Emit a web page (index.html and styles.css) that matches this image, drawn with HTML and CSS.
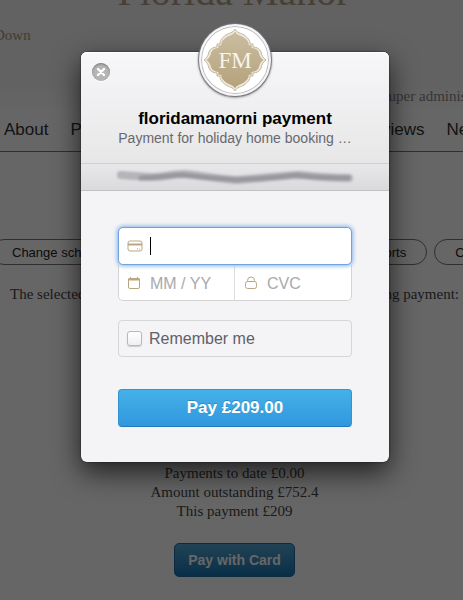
FILE: index.html
```html
<!DOCTYPE html>
<html lang="en">
<head>
  <meta charset="UTF-8">
  <meta name="viewport" content="width=device-width, initial-scale=1.0">
  <title>Florida Manor - Payment</title>
  <link rel="stylesheet" href="styles.css">
</head>
<body>
  <div class="page">
    <header class="site-header">
      <div class="site-title">Florida Manor</div>
      <div class="site-tagline">Down</div>
      <div class="site-user">super administrator</div>
    </header>
    <nav class="site-nav">
      <a href="#">About</a>
      <a href="#">Prices</a>
      <a href="#" class="push">Reviews</a>
      <a href="#">News</a>
    </nav>
    <div class="actions">
      <button class="pill">Change schedule</button>
      <button class="pill push">Reports</button>
      <button class="pill">Contact</button>
    </div>
    <p class="intro"><span>The selected booking</span><span>following payment:</span></p>
    <div class="totals">
      <div>Payments to date £0.00</div>
      <div>Amount outstanding £752.4</div>
      <div>This payment £209</div>
      <button class="card-button">Pay with Card</button>
    </div>
  </div>

  <div class="overlay">
    <div class="modal" role="dialog" aria-labelledby="modal-title">
      <button class="close" aria-label="Close">
        <svg width="18" height="18" viewBox="0 0 18 18">
          <path d="M6 6l6 6M12 6l-6 6" stroke="#fff" stroke-width="2.4" stroke-linecap="round"/>
        </svg>
      </button>
      <div class="logo">
        <svg width="64" height="64" viewBox="-32 -32 64 64">
          <defs>
            <linearGradient id="gold" x1="0" y1="0" x2="0" y2="1">
              <stop offset="0" stop-color="#cabda1"/>
              <stop offset="1" stop-color="#b5a27c"/>
            </linearGradient>
            <path id="crest" d="M0-31C2-27 6-27 9-25C13-22 15-20 15-16H18V-13C22-13 25-11 26-8C27-4 28-2 31 0C28 2 27 4 26 8C25 11 22 13 18 13V16H15C15 20 13 22 9 25C6 27 2 27 0 31C-2 27-6 27-9 25C-13 22-15 20-15 16H-18V13C-22 13-25 11-26 8C-27 4-28 2-31 0C-28-2-27-4-26-8C-25-11-22-13-18-13V-16H-15C-15-20-13-22-9-25C-6-27-2-27 0-31Z"/>
          </defs>
          <use href="#crest" fill="#efeadf" stroke="#c3b596" stroke-width="1"/>
          <use href="#crest" fill="url(#gold)" transform="scale(.92)"/>
          <text x="0" y="8" text-anchor="middle" font-family="Liberation Serif, serif" font-size="23" fill="#f8f4e9">FM</text>
        </svg>
      </div>
      <div class="modal-header">
        <h1 id="modal-title">floridamanorni payment</h1>
        <h2>Payment for holiday home booking …</h2>
      </div>
      <div class="account">
        <svg width="242" height="22" viewBox="0 0 242 22">
          <g class="smudge">
            <path d="M7 9C16 10 24 10 33 11C48 12 58 8 70 8C84 9 98 12 122 14C146 13 160 10 186 9C204 11 220 12 235 12" stroke="#b4b4b9" stroke-width="8"/>
            <path d="M27 12C44 12 56 9 69 9C84 11 100 12 122 14C148 13 162 11 183 9C200 12 217 12 234 12" stroke="#98989e" stroke-width="5"/>
          </g>
        </svg>
      </div>
      <form class="modal-body">
        <div class="field card">
          <svg width="16" height="14" viewBox="0 0 16 14" fill="none" stroke="#b9a783">
            <rect x="1" y="2" width="14" height="10" rx="2"/>
            <path d="M1 5.5h14" stroke-width="2"/>
            <path d="M10 10h1M12 10h1"/>
          </svg>
          <span class="caret"></span>
          <input type="text" aria-label="Card number">
        </div>
        <div class="field-row">
          <div class="field">
            <svg width="14" height="14" viewBox="0 0 14 14" fill="none" stroke="#b9a783">
              <rect x="1.5" y="2.5" width="11" height="10" rx="1.5"/>
              <path d="M1 3.5h12" stroke-width="2"/>
              <path d="M3.5 1v2M10.5 1v2"/>
            </svg>
            <input type="text" placeholder="MM / YY" aria-label="Expiry date">
          </div>
          <div class="field">
            <svg width="14" height="14" viewBox="0 0 14 14" fill="none" stroke="#b9a783">
              <rect x="1.5" y="5.5" width="11" height="7" rx="2"/>
              <path d="M3.5 5.5V4.5a3.5 3.5 0 0 1 7 0V5.5"/>
            </svg>
            <input type="text" placeholder="CVC" aria-label="CVC">
          </div>
        </div>
        <label class="remember">
          <input type="checkbox">
          <span>Remember me</span>
        </label>
        <button type="button" class="pay">Pay £209.00</button>
      </form>
    </div>
  </div>
</body>
</html>
```
FILE: styles.css
```css
* {
  box-sizing: border-box;
}

body {
  margin: 0;
  background: #fff;
  color: #444;
  font-family: Georgia, "Liberation Serif", serif;
  font-size: 15px;
  overflow: hidden;
}

button,
input {
  font-family: "Helvetica Neue", "Liberation Sans", sans-serif;
}

/* Page behind the dialog */
.page {
  display: flow-root;
  min-height: 100vh;
  overflow: hidden;
}

.site-header {
  display: flow-root;
  height: 114px;
  background: linear-gradient(#f4f4f4 70%, #fff);
}

.site-title {
  margin-top: -35px;
  padding-left: 4px;
  line-height: 54px;
  font-size: 40px;
  text-align: center;
  color: #b3a184;
}

.site-tagline {
  margin: 6px 0 0 -6px;
  line-height: 20px;
  color: #ad9678;
}

.site-user {
  margin: 41px -52px 0 0;
  line-height: 20px;
  font-size: 15px;
  text-align: right;
  color: #888;
  padding-right: 16px;
}

.site-nav {
  display: flex;
  gap: 22px;
  height: 38px;
  padding: 6px 0 0 4px;
  border-bottom: 1px solid #777;
  font-family: "Helvetica Neue", "Liberation Sans", sans-serif;
  font-size: 17px;
  line-height: 20px;
}

.site-nav a {
  color: #333;
  text-decoration: none;
}

.site-nav a:last-child {
  margin-right: -26px;
}

.push {
  margin-left: auto;
}

.actions {
  display: flex;
  gap: 7px;
  margin: 87px -58px 0 -9px;
}

.pill {
  height: 26px;
  padding: 0 20px;
  border: 1px solid #777;
  border-radius: 13px;
  background: transparent;
  font-size: 13px;
  color: #222;
}

.intro {
  display: flex;
  justify-content: space-between;
  margin: 19px 4px 0 10px;
  line-height: 20px;
}

.totals {
  margin-top: 160px;
  padding-left: 6px;
  line-height: 19px;
  text-align: center;
}

.card-button {
  height: 34px;
  margin-top: 22px;
  padding: 0 13px;
  border: 1px solid #1a6da3;
  border-radius: 5px;
  background: linear-gradient(#57a8d5, #1574b5);
  font-size: 14px;
  font-weight: bold;
  color: #fff;
}

/* Dialog */
.overlay {
  position: absolute;
  inset: 0;
  padding: 52px 0 0 7px;
  background: rgba(0, 0, 0, 0.6);
  font-family: "Helvetica Neue", "Liberation Sans", sans-serif;
}

.modal {
  position: relative;
  width: 308px;
  max-width: 94%;
  margin: 0 auto;
  border-radius: 6px;
  background: #f4f4f6;
  box-shadow: 0 0 2px rgba(0, 0, 0, 0.7), 0 10px 28px rgba(0, 0, 0, 0.7);
}

.close {
  position: absolute;
  top: 11px;
  left: 11px;
  width: 18px;
  height: 18px;
  padding: 0;
  border: 0;
  border-radius: 50%;
  background: #b5b5b6;
  box-shadow: inset 0 1px 2px #777, 0 1px 0 #fff;
}

.close svg {
  display: block;
}

.logo {
  position: absolute;
  top: -28px;
  left: 50%;
  display: flex;
  align-items: center;
  justify-content: center;
  width: 72px;
  height: 72px;
  margin-left: -36px;
  border: 2px solid #f5f5f7;
  border-radius: 50%;
  background: #fff;
  box-shadow: inset 0 0 0 1px #b9babf, 0 0 1px 1px #77777c, 0 1px 3px #555;
}

.logo svg {
  flex: none;
}

.modal-header {
  height: 112px;
  padding-top: 56px;
  border-bottom: 1px solid #cfcfd1;
  border-radius: 6px 6px 0 0;
  background: linear-gradient(#f7f7f9, #e7e7e8);
  box-shadow: inset 0 1px 0 #fff;
  text-align: center;
}

.modal-header h1 {
  margin: 0;
  line-height: 21px;
  font-size: 17px;
  color: #000;
}

.modal-header h2 {
  margin: 0;
  line-height: 19px;
  font-size: 14px;
  font-weight: normal;
  color: #68686e;
}

.account {
  display: flex;
  align-items: center;
  justify-content: center;
  height: 27px;
  border-bottom: 1px solid #c1c1c4;
  background: linear-gradient(#e8e8ea, #dadadd);
}

.smudge {
  fill: none;
  stroke-linecap: round;
  stroke-linejoin: round;
  filter: blur(1px);
}

.modal-body {
  padding: 36px 37px 35px;
}

.field {
  display: flex;
  flex: 1;
  align-items: center;
  min-width: 0;
  height: 35px;
  padding: 0 8px;
}

.field svg {
  flex: none;
}

.field input {
  flex: 1;
  width: 100%;
  min-width: 0;
  margin-left: 9px;
  padding: 2px 0 0;
  border: 0;
  outline: 0;
  background: transparent;
  font-size: 16px;
  color: #222;
}

.field input::placeholder {
  color: #a9a9ae;
}

.card {
  position: relative;
  height: 38px;
  border: 1px solid #6fa3df;
  border-radius: 5px;
  background: #fff;
  box-shadow: 0 0 4px 1px #86b3ea;
}

.caret {
  width: 1px;
  height: 18px;
  margin-left: 7px;
  background: #000;
}

.field-row {
  display: flex;
  border: 1px solid #d3d3d6;
  border-top: 0;
  border-radius: 0 0 5px 5px;
  background: #fff;
}

.field-row .field + .field {
  padding-left: 9px;
  border-left: 1px solid #dedee1;
}

.remember {
  display: flex;
  align-items: center;
  height: 37px;
  margin-top: 19px;
  padding-left: 8px;
  border: 1px solid #d6d6d9;
  border-radius: 4px;
  font-size: 16px;
  color: #606066;
}

.remember input {
  appearance: none;
  width: 15px;
  height: 15px;
  margin: 0 7px 0 0;
  border: 1px solid #b8b8bc;
  border-radius: 3px;
  background: linear-gradient(#fff, #f0f0f2);
  box-shadow: 0 1px 1px #ccc;
}

.pay {
  display: block;
  width: 100%;
  height: 38px;
  margin-top: 32px;
  border: 1px solid #3193d2;
  border-bottom-color: #2477bb;
  border-radius: 4px;
  background: linear-gradient(#45b1e8, #3097de);
  font-size: 17px;
  font-weight: bold;
  color: #fff;
  text-shadow: 0 -1px 0 rgba(0, 0, 0, 0.2);
}
```
